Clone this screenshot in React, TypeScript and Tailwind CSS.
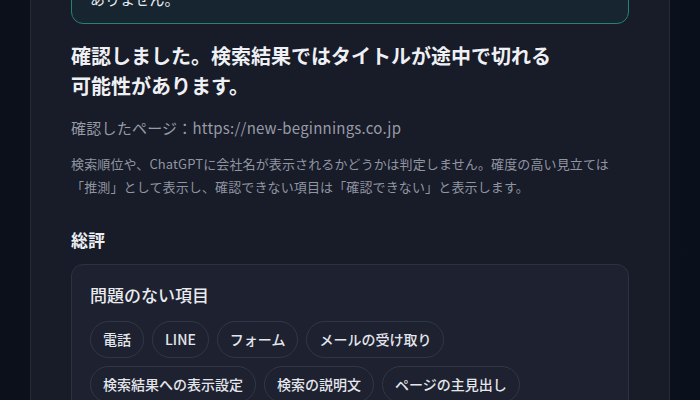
import React from "react";

const chipsRow = [
  "電話",
  "LINE",
  "フォーム",
  "メールの受け取り",
  "検索結果への表示設定",
  "検索の説明文",
  "ページの主見出し",
  "画像の説明",
];

export default function App() {
  return (
    <div
      className="h-[400px] w-[700px] overflow-hidden bg-gradient-to-r from-[#0b101a] via-[#0d1220] to-[#0a101b]"
      style={{ fontFamily: '"Noto Sans CJK JP", "Noto Sans", sans-serif' }}
    >
      <div className="ml-[30px] w-[640px] h-[600px] -mt-[50px] border-x border-[#262a37] bg-[#181b28] px-10">
        <div className="rounded-[12px] border border-[#2a8078] bg-[#172531] px-[18px] pt-[12px] pb-[12px] text-[15px] leading-[24px] text-[#e9ecef]">
          <p>入力フォームと電話番号は確認できました。大きな問題は</p>
          <p>ありません。</p>
        </div>

        <h2 className="mt-[17px] text-[20px] leading-[30px] font-bold text-[#eef0f4]">
          確認しました。検索結果ではタイトルが途中で切れる
          <br />
          可能性があります。
        </h2>

        <p className="mt-[15px] text-[15px] leading-[24px] tracking-[0.015em] text-[#979ca7]">
          確認したページ：https://new-beginnings.co.jp
        </p>

        <p className="mt-[12px] text-[13px] leading-[23px] tracking-[0.01em] text-[#8f95a1]">
          検索順位や、ChatGPTに会社名が表示されるかどうかは判定しません。確度の高い見立ては
          <br />
          「推測」として表示し、確認できない項目は「確認できない」と表示します。
        </p>

        <h3 className="mt-[29px] text-[17px] leading-[26px] font-bold text-[#eceef2]">
          総評
        </h3>

        <div className="mt-[11px] rounded-[12px] border border-[#2d3141] bg-[#1d2130] p-[18px]">
          <h4 className="text-[17px] leading-[24px] font-medium text-[#e9ebef]">
            問題のない項目
          </h4>
          <div className="mt-[14px] flex flex-wrap gap-x-2 gap-y-2">
            {chipsRow.map((c) => (
              <span
                key={c}
                className="flex h-[37px] items-center rounded-full border border-[#323747] px-3 text-[14px] font-medium text-[#e4e6eb]"
              >
                {c}
              </span>
            ))}
          </div>
        </div>
      </div>
    </div>
  );
}
